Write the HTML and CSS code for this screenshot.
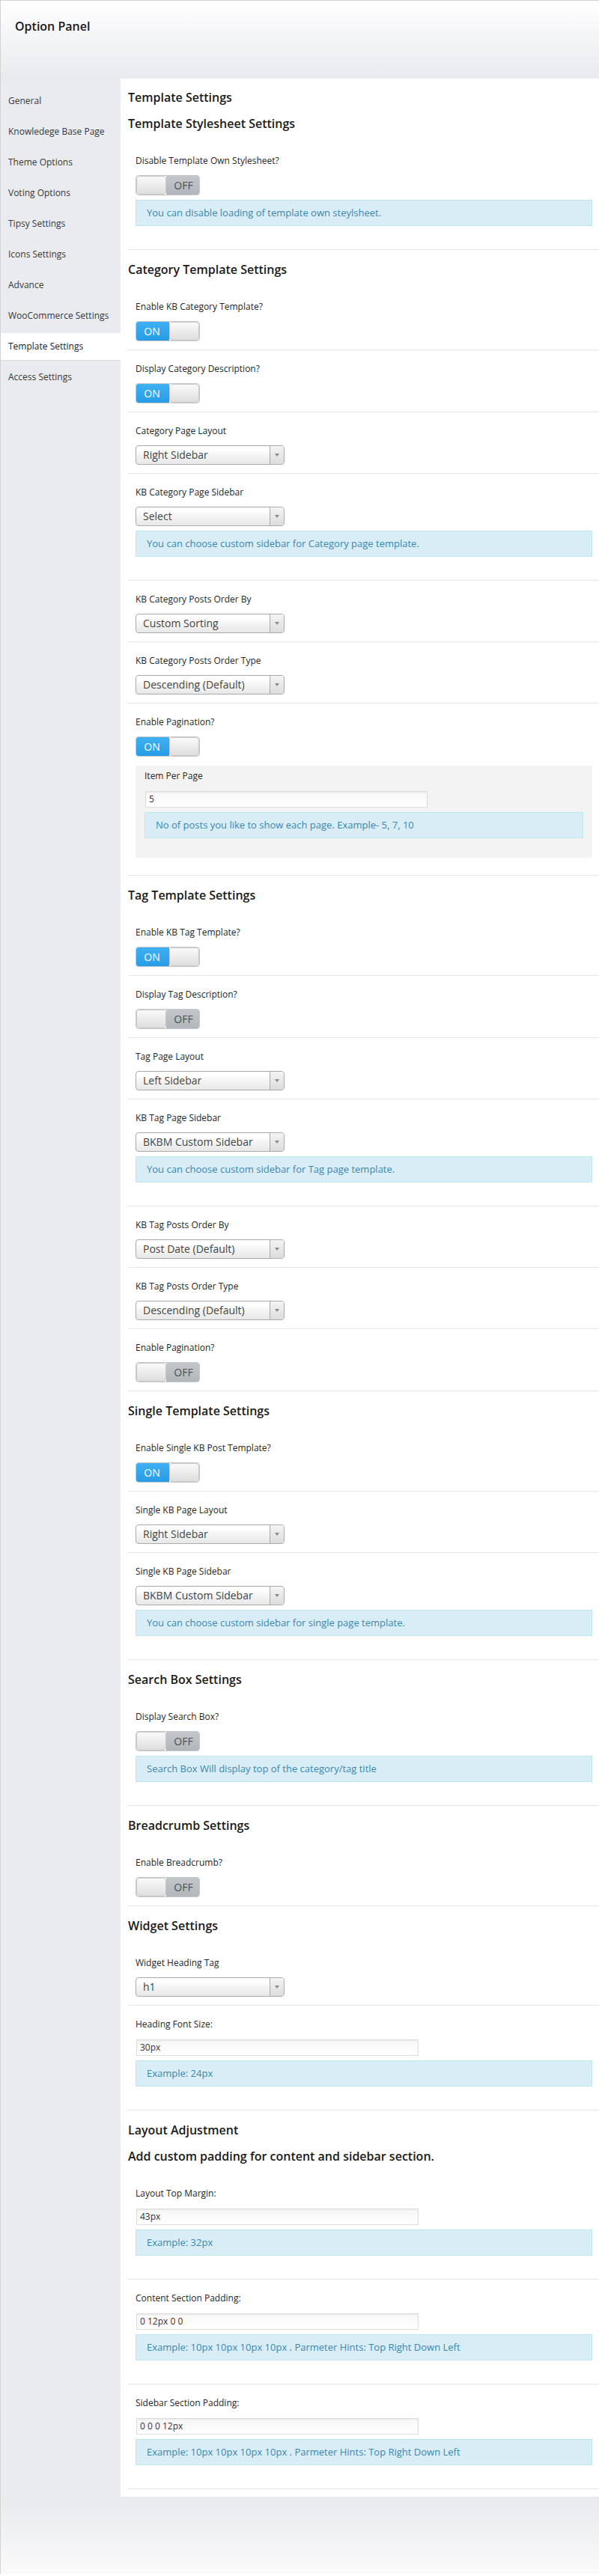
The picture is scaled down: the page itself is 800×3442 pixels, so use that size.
FILE: index.html
```html
<!DOCTYPE html>
<html lang="en">
<head>
<meta charset="utf-8">
<title>Option Panel</title>
<link rel="stylesheet" href="styles.css">
</head>
<body>
<div class="page">
  <header class="head"><h1 class="head-title">Option Panel</h1></header>
  <div class="main">
    <nav class="side">
      <div class="nav-item">General</div>
      <div class="nav-item">Knowledege Base Page</div>
      <div class="nav-item">Theme Options</div>
      <div class="nav-item">Voting Options</div>
      <div class="nav-item">Tipsy Settings</div>
      <div class="nav-item">Icons Settings</div>
      <div class="nav-item">Advance</div>
      <div class="nav-item">WooCommerce Settings</div>
      <div class="nav-item active">Template Settings</div>
      <div class="nav-item">Access Settings</div>
    </nav>
    <main class="content">
      <div class="sec-head">
        <h2>Template Settings</h2>
        <h2>Template Stylesheet Settings</h2>
      </div>
      <div class="row">
        <div class="label">Disable Template Own Stylesheet?</div>
        <div class="switch off"><span class="knob"></span><span class="sw-text">OFF</span></div>
        <div class="info">You can disable loading of template own steylsheet.</div>
      </div>

      <div class="sec-head"><h2>Category Template Settings</h2></div>
      <div class="row">
        <div class="label">Enable KB Category Template?</div>
        <div class="switch on"><span class="sw-text">ON</span><span class="knob"></span></div>
      </div>
      <div class="row">
        <div class="label">Display Category Description?</div>
        <div class="switch on"><span class="sw-text">ON</span><span class="knob"></span></div>
      </div>
      <div class="row">
        <div class="label">Category Page Layout</div>
        <div class="select"><span class="sel-text">Right Sidebar</span><span class="sel-arrow"></span></div>
      </div>
      <div class="row">
        <div class="label">KB Category Page Sidebar</div>
        <div class="select"><span class="sel-text">Select</span><span class="sel-arrow"></span></div>
        <div class="info">You can choose custom sidebar for Category page template.</div>
      </div>
      <div class="row">
        <div class="label">KB Category Posts Order By</div>
        <div class="select"><span class="sel-text">Custom Sorting</span><span class="sel-arrow"></span></div>
      </div>
      <div class="row">
        <div class="label">KB Category Posts Order Type</div>
        <div class="select"><span class="sel-text">Descending (Default)</span><span class="sel-arrow"></span></div>
      </div>
      <div class="row">
        <div class="label">Enable Pagination?</div>
        <div class="switch on"><span class="sw-text">ON</span><span class="knob"></span></div>
        <div class="subbox">
          <div class="label input-label">Item Per Page</div>
          <div class="text-input">5</div>
          <div class="info">No of posts you like to show each page. Example- 5, 7, 10</div>
        </div>
      </div>

      <div class="sec-head"><h2>Tag Template Settings</h2></div>
      <div class="row">
        <div class="label">Enable KB Tag Template?</div>
        <div class="switch on"><span class="sw-text">ON</span><span class="knob"></span></div>
      </div>
      <div class="row">
        <div class="label">Display Tag Description?</div>
        <div class="switch off"><span class="knob"></span><span class="sw-text">OFF</span></div>
      </div>
      <div class="row">
        <div class="label">Tag Page Layout</div>
        <div class="select"><span class="sel-text">Left Sidebar</span><span class="sel-arrow"></span></div>
      </div>
      <div class="row">
        <div class="label">KB Tag Page Sidebar</div>
        <div class="select"><span class="sel-text">BKBM Custom Sidebar</span><span class="sel-arrow"></span></div>
        <div class="info">You can choose custom sidebar for Tag page template.</div>
      </div>
      <div class="row">
        <div class="label">KB Tag Posts Order By</div>
        <div class="select"><span class="sel-text">Post Date (Default)</span><span class="sel-arrow"></span></div>
      </div>
      <div class="row">
        <div class="label">KB Tag Posts Order Type</div>
        <div class="select"><span class="sel-text">Descending (Default)</span><span class="sel-arrow"></span></div>
      </div>
      <div class="row">
        <div class="label">Enable Pagination?</div>
        <div class="switch off"><span class="knob"></span><span class="sw-text">OFF</span></div>
      </div>

      <div class="sec-head"><h2>Single Template Settings</h2></div>
      <div class="row">
        <div class="label">Enable Single KB Post Template?</div>
        <div class="switch on"><span class="sw-text">ON</span><span class="knob"></span></div>
      </div>
      <div class="row">
        <div class="label">Single KB Page Layout</div>
        <div class="select"><span class="sel-text">Right Sidebar</span><span class="sel-arrow"></span></div>
      </div>
      <div class="row">
        <div class="label">Single KB Page Sidebar</div>
        <div class="select"><span class="sel-text">BKBM Custom Sidebar</span><span class="sel-arrow"></span></div>
        <div class="info">You can choose custom sidebar for single page template.</div>
      </div>

      <div class="sec-head"><h2>Search Box Settings</h2></div>
      <div class="row">
        <div class="label">Display Search Box?</div>
        <div class="switch off"><span class="knob"></span><span class="sw-text">OFF</span></div>
        <div class="info">Search Box Will display top of the category/tag title</div>
      </div>

      <div class="sec-head"><h2>Breadcrumb Settings</h2></div>
      <div class="row">
        <div class="label">Enable Breadcrumb?</div>
        <div class="switch off"><span class="knob"></span><span class="sw-text">OFF</span></div>
      </div>

      <div class="sec-head"><h2>Widget Settings</h2></div>
      <div class="row">
        <div class="label">Widget Heading Tag</div>
        <div class="select"><span class="sel-text">h1</span><span class="sel-arrow"></span></div>
      </div>
      <div class="row">
        <div class="label input-label">Heading Font Size:</div>
        <div class="text-input">30px</div>
        <div class="info">Example: 24px</div>
      </div>

      <div class="sec-head">
        <h2>Layout Adjustment</h2>
        <h2>Add custom padding for content and sidebar section.</h2>
      </div>
      <div class="row">
        <div class="label input-label">Layout Top Margin:</div>
        <div class="text-input">43px</div>
        <div class="info">Example: 32px</div>
      </div>
      <div class="row">
        <div class="label input-label">Content Section Padding:</div>
        <div class="text-input">0 12px 0 0</div>
        <div class="info">Example: 10px 10px 10px 10px . Parmeter Hints: Top Right Down Left</div>
      </div>
      <div class="row">
        <div class="label input-label">Sidebar Section Padding:</div>
        <div class="text-input">0 0 0 12px</div>
        <div class="info">Example: 10px 10px 10px 10px . Parmeter Hints: Top Right Down Left</div>
      </div>
    </main>
  </div>
  <footer class="foot"></footer>
</div>
</body>
</html>
```
FILE: styles.css
```css
html, body {
  margin: 0;
  padding: 0;
  background: #ffffff;
}

body {
  font-family: "Open Sans", "DejaVu Sans", sans-serif;
  color: #333;
}

.page {
  width: 800px;
}

.head {
  box-sizing: border-box;
  height: 105px;
  border-top: 1px solid #d2d2d2;
  border-left: 1px solid #d2d2d2;
  background: linear-gradient(#ffffff, #e8eaee);
  padding: 22px 0 0 19px;
}

.head-title {
  margin: 0;
  font-size: 16px;
  line-height: 24px;
  font-weight: 600;
  color: #1a1a1a;
}

.main {
  display: flex;
  border-left: 1px solid #d2d4d8;
}

.side {
  flex: none;
  width: 160px;
  background: #e9ebef;
  padding-top: 12px;
}

.nav-item {
  height: 36px;
  line-height: 36px;
  margin-bottom: 5px;
  padding-left: 10px;
  font-size: 12px;
  color: #383838;
  white-space: nowrap;
}

.nav-item.active {
  background: #ffffff;
  color: #222;
  box-shadow: 0 1px 1px rgba(0, 0, 0, 0.06);
}

.content {
  flex: 1;
  background: #ffffff;
  padding: 0 0 10px 10px;
}

.sec-head {
  display: flex;
  flex-direction: column;
  gap: 13px;
  padding: 15px 0 14px;
}

.sec-head:first-child {
  padding-top: 14px;
}

.sec-head h2 {
  margin: 0;
  font-size: 16px;
  line-height: 22px;
  font-weight: 600;
  color: #1a1a1a;
}

.row {
  padding: 17px 9px 11px 10px;
  border-bottom: 1px solid #e7e7e7;
}

.label {
  font-size: 12px;
  line-height: 16px;
  color: #262626;
  margin-bottom: 11px;
}

.label.input-label {
  margin-bottom: 12px;
}

/* toggle switch */
.switch {
  box-sizing: border-box;
  display: flex;
  width: 86px;
  height: 27px;
  border-radius: 4px;
  overflow: hidden;
  border: 1px solid #c4c8cc;
}

.switch .sw-text {
  flex: none;
  width: 42px;
  display: flex;
  align-items: center;
  justify-content: center;
  font-size: 14px;
  line-height: 25px;
}

.switch .knob {
  flex: 1;
  box-sizing: border-box;
  background: linear-gradient(#fafafa, #dedede);
  border: 1px solid #c8c8c8;
  border-radius: 4px;
}

.switch.on {
  border-color: #c8c8c8;
}

.switch.on .sw-text {
  background: linear-gradient(#3fb0f3, #279ce6);
  color: #ffffff;
  padding-right: 2px;
}

.switch.off .sw-text {
  background: linear-gradient(#c3c7cb, #b1b6bb);
  color: #4b4f53;
  padding-left: 2px;
}

/* chosen style select */
.select {
  box-sizing: border-box;
  display: flex;
  width: 199px;
  height: 26px;
  border: 1px solid #aaaaaa;
  border-radius: 4px;
  background: linear-gradient(#ffffff 20%, #f4f4f4 50%, #e8e8e8 100%);
  overflow: hidden;
}

.sel-text {
  flex: 1;
  padding-left: 9px;
  font-size: 14px;
  line-height: 24px;
  color: #444;
  white-space: nowrap;
}

.sel-arrow {
  flex: none;
  width: 18px;
  border-left: 1px solid #aaaaaa;
  background: linear-gradient(#f4f4f4, #dcdcdc);
  display: flex;
  align-items: center;
  justify-content: center;
}

.sel-arrow::after {
  content: "";
  width: 0;
  height: 0;
  border-left: 3px solid transparent;
  border-right: 3px solid transparent;
  border-top: 4px solid #8a8a8a;
}

/* text input */
.text-input {
  box-sizing: border-box;
  width: 377px;
  height: 22px;
  margin-left: 1px;
  border: 1px solid #dddddd;
  box-shadow: inset 0 1px 2px rgba(0, 0, 0, 0.07);
  background: linear-gradient(#f7f7f7, #ffffff);
  padding-left: 4px;
  font-size: 12px;
  line-height: 20px;
  color: #333;
}

/* info note */
.info {
  box-sizing: border-box;
  margin: 6px 0 20px;
  min-height: 35px;
  padding: 7px 14px;
  background: #d9edf7;
  border: 1px solid #bce8f1;
  color: #3a87ad;
  font-size: 13px;
  line-height: 19px;
}

.subbox {
  margin: 12px 0 12px;
  padding: 6px 12px 6px;
  background: #f3f3f3;
}

.foot {
  height: 103px;
  border-left: 1px solid #d2d2d2;
  background: linear-gradient(#e8eaee, #fafafa);
}
```
